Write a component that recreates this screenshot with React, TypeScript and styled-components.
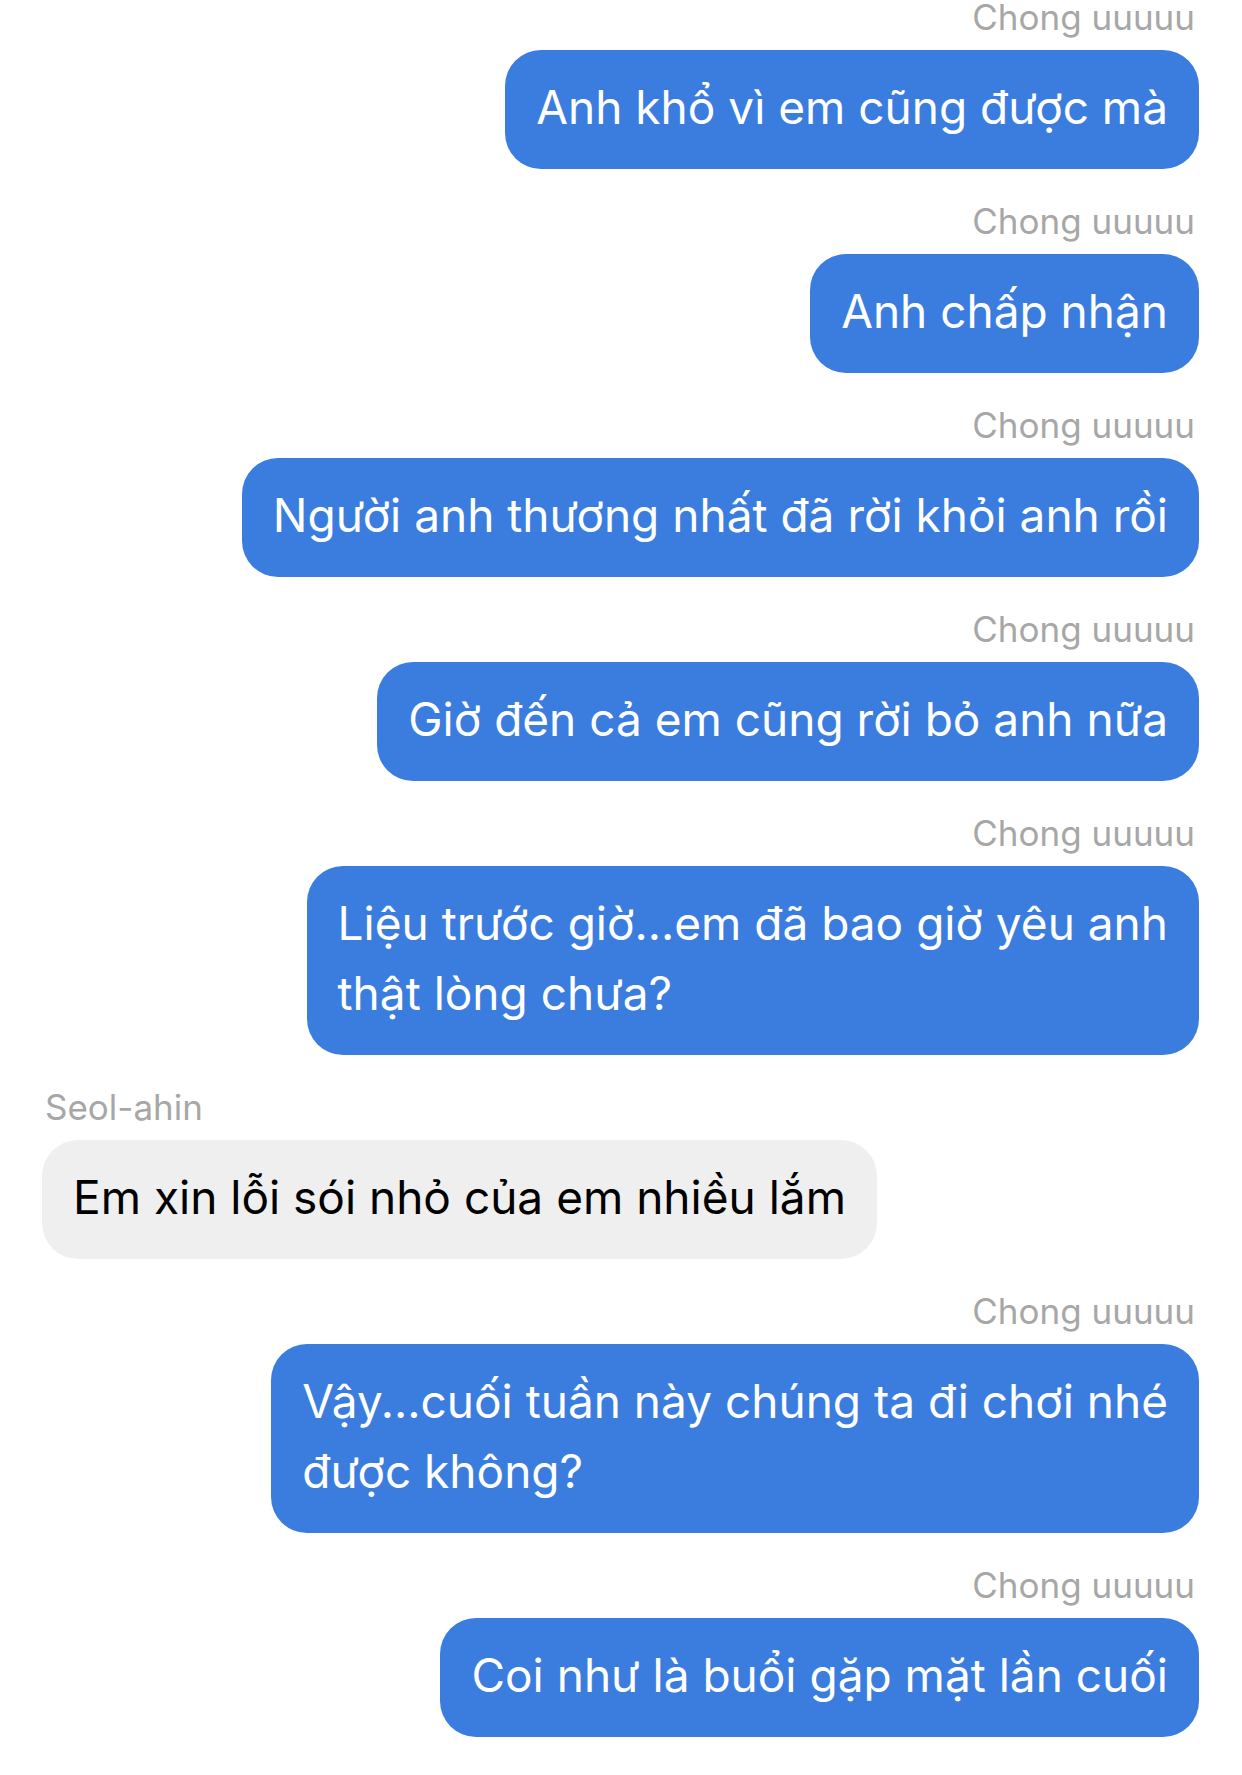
import styled, { createGlobalStyle } from 'styled-components'

const GlobalStyle = createGlobalStyle`
  html, body {
    margin: 0;
    padding: 0;
    background: #ffffff;
  }
  body {
    font-family: Inter, 'Noto Sans', 'Liberation Sans', sans-serif;
    -webkit-font-smoothing: antialiased;
  }
`

const Thread = styled.div`
  width: 1242px;
  height: 1775px;
  overflow: hidden;
  box-sizing: border-box;
  padding: 0 43px 0 42px;
`

const List = styled.div`
  display: flex;
  flex-direction: column;
  margin-top: -5px;
`

const Group = styled.div<{ $mine: boolean }>`
  display: flex;
  flex-direction: column;
  align-items: ${p => (p.$mine ? 'flex-end' : 'flex-start')};
  margin-bottom: 30px;
`

const Sender = styled.div<{ $mine: boolean }>`
  font-size: 35px;
  line-height: 44px;
  color: #a7a7a7;
  margin-bottom: 11px;
  padding: ${p => (p.$mine ? '0 4px 0 0' : '0 0 0 3px')};
`

const Bubble = styled.div<{ $mine: boolean }>`
  background: ${p => (p.$mine ? '#3a7ddf' : '#efefef')};
  color: ${p => (p.$mine ? '#ffffff' : '#000000')};
  font-size: 46px;
  line-height: 70px;
  padding: 22px 31px 27px 31px;
  border-radius: 36px;
  white-space: pre-line;
`

type Message = { from: 'me' | 'them'; text: string }

const messages: Message[] = [
  { from: 'me', text: 'Anh khổ vì em cũng được mà' },
  { from: 'me', text: 'Anh chấp nhận' },
  { from: 'me', text: 'Người anh thương nhất đã rời khỏi anh rồi' },
  { from: 'me', text: 'Giờ đến cả em cũng rời bỏ anh nữa' },
  { from: 'me', text: 'Liệu trước giờ...em đã bao giờ yêu anh\nthật lòng chưa?' },
  { from: 'them', text: 'Em xin lỗi sói nhỏ của em nhiều lắm' },
  { from: 'me', text: 'Vậy...cuối tuần này chúng ta đi chơi nhé\nđược không?' },
  { from: 'me', text: 'Coi như là buổi gặp mặt lần cuối' },
]

function App() {
  return (
    <>
      <GlobalStyle />
      <Thread>
        <List>
          {messages.map((m, i) => {
            const mine = m.from === 'me'
            return (
              <Group key={i} $mine={mine}>
                <Sender $mine={mine}>{mine ? 'Chong uuuuu' : 'Seol-ahin'}</Sender>
                <Bubble $mine={mine}>{m.text}</Bubble>
              </Group>
            )
          })}
          <Group $mine={false}>
            <Sender $mine={false}>Seol-ahin</Sender>
          </Group>
        </List>
      </Thread>
    </>
  )
}

export default App
